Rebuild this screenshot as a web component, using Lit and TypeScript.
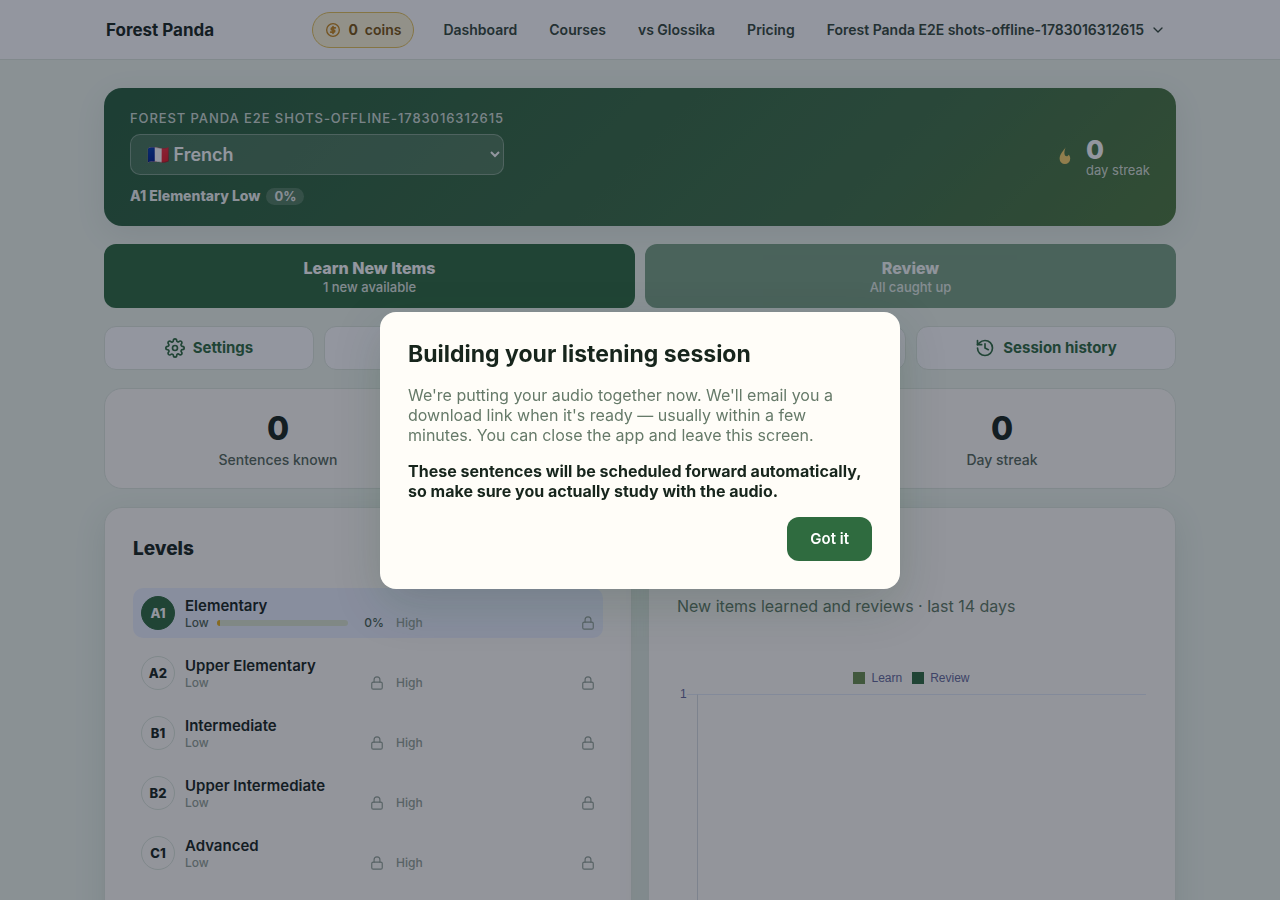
import { LitElement, html, css, svg, nothing } from "lit";
import { customElement, state } from "lit/decorators.js";

const USER = "Forest Panda E2E shots-offline-1783016312615";

const icon = (size: number, body: unknown, stroke = 2) => html`<svg
  width=${size} height=${size} viewBox="0 0 24 24" fill="none" stroke="currentColor"
  stroke-width=${stroke} stroke-linecap="round" stroke-linejoin="round" aria-hidden="true">${body}</svg>`;

const chevron = svg`<path d="m6 9 6 6 6-6"/>`;
const lock = svg`<rect x="3" y="10.500" width="18" height="12" rx="2.500"/><path d="M7 10.500V6.500a5 5 0 0 1 10 0v4"/>`;
const history = svg`<path d="M3 12a9 9 0 1 0 9-9 9.750 9.750 0 0 0-6.740 2.740L3 8"/><path d="M3 3v5h5"/><path d="M12 7v5l4 2"/>`;
const gear = svg`<circle cx="12" cy="12" r="3"/><path d="M19.4 15a1.65 1.65 0 0 0 .33 1.82l.06.06a2 2 0 0 1 0 2.83 2 2 0 0 1-2.83 0l-.06-.06a1.65 1.65 0 0 0-1.82-.33 1.65 1.65 0 0 0-1 1.51V21a2 2 0 0 1-2 2 2 2 0 0 1-2-2v-.09A1.65 1.65 0 0 0 9 19.4a1.65 1.65 0 0 0-1.82.33l-.06.06a2 2 0 0 1-2.83 0 2 2 0 0 1 0-2.83l.06-.06a1.65 1.65 0 0 0 .33-1.82 1.65 1.65 0 0 0-1.51-1H3a2 2 0 0 1-2-2 2 2 0 0 1 2-2h.09A1.65 1.65 0 0 0 4.6 9a1.65 1.65 0 0 0-.33-1.82l-.06-.06a2 2 0 0 1 0-2.83 2 2 0 0 1 2.83 0l.06.06a1.65 1.65 0 0 0 1.82.33H9a1.65 1.65 0 0 0 1-1.51V3a2 2 0 0 1 2-2 2 2 0 0 1 2 2v.09a1.65 1.65 0 0 0 1 1.51 1.65 1.65 0 0 0 1.82-.33l.06-.06a2 2 0 0 1 2.83 0 2 2 0 0 1 0 2.83l-.06.06a1.65 1.65 0 0 0-.33 1.82V9a1.65 1.65 0 0 0 1.51 1H21a2 2 0 0 1 2 2 2 2 0 0 1-2 2h-.09a1.65 1.65 0 0 0-1.51 1z"/>`;
const coin = svg`<circle cx="12" cy="12" r="9.500"/><g stroke-width="2.500"><path d="M15.500 8.800h-4.500a1.600 1.600 0 0 0 0 3.200h2a1.600 1.600 0 0 1 0 3.200h-4.500"/><path d="M12 6.800v10.400"/></g>`;
const headphones = svg`<path d="M3 18v-6a9 9 0 0 1 18 0v6"/><path d="M21 19a2 2 0 0 1-2 2h-1v-6h3zM3 19a2 2 0 0 0 2 2h1v-6H3z"/>`;

interface Level { code: string; name: string; progress?: number; }

const LEVELS: Level[] = [
  { code: "A1", name: "Elementary", progress: 0 },
  { code: "A2", name: "Upper Elementary" },
  { code: "B1", name: "Intermediate" },
  { code: "B2", name: "Upper Intermediate" },
  { code: "C1", name: "Advanced" },
];

@customElement("app-root")
export class AppRoot extends LitElement {
  @state() private dialogOpen = true;

  static styles = css`
    :host {
      display: block;
      height: 100vh;
      overflow: hidden;
      background: #eef6ec;
      color: #17251c;
      font-family: Inter, "Liberation Sans", sans-serif;
      font-size: 16px;
      line-height: 20px;
    }
    *, *::before, *::after { box-sizing: border-box; }
    h1, h2, p, ul { margin: 0; padding: 0; }
    button, select { font: inherit; cursor: pointer; }
    svg { display: block; flex: none; }

    .header { background: #fff; border-bottom: 1px solid #dfe8dd; }
    .bar {
      max-width: 1072px;
      height: 59px;
      margin: 0 auto;
      padding: 0 10px 0 2px;
      display: flex;
      align-items: center;
      justify-content: space-between;
    }
    .brand { color: inherit; font-size: 17px; font-weight: 700; text-decoration: none; }
    .nav { display: flex; align-items: center; gap: 32px; font-size: 14px; font-weight: 600; color: #33473a; }
    .nav a { color: inherit; text-decoration: none; }
    .nav .coins {
      display: flex;
      align-items: center;
      gap: 7px;
      height: 36px;
      padding: 0 12px;
      margin-right: -3px;
      border: 1px solid #e6c35a;
      border-radius: 18px;
      background: #fdf6d8;
      color: #7a5510;
    }
    .coins svg { color: #c8871b; }
    .coins b { font-weight: 700; }
    .account {
      display: flex;
      align-items: center;
      gap: 6px;
      padding: 0;
      border: 0;
      background: none;
      color: inherit;
    }

    .page { max-width: 1120px; margin: 0 auto; padding: 28px 24px; display: flex; flex-direction: column; gap: 18px; }

    .hero {
      display: flex;
      align-items: center;
      justify-content: space-between;
      padding: 20px 26px;
      border-radius: 18px;
      background: linear-gradient(135deg, #285f3c, #3f7046 70%, #4f7a3d);
      box-shadow: 0 8px 32px rgba(15, 23, 42, 0.08);
      color: #fff;
    }
    .hero-main { display: flex; flex-direction: column; }
    .hero-label {
      font-size: 13px;
      font-weight: 500;
      letter-spacing: 0.07em;
      text-transform: uppercase;
      color: rgba(255, 255, 255, 0.8);
    }
    .language {
      height: 41px;
      margin: 6px 0 11px;
      padding: 0 12px;
      border: 1px solid rgba(255, 255, 255, 0.3);
      border-radius: 10px;
      background: rgba(255, 255, 255, 0.14);
      color: #fff;
      font-size: 18px;
      font-weight: 600;
    }
    .language option { color: #17251c; }
    .level-line { display: flex; align-items: center; gap: 6px; font-size: 14px; font-weight: 800; color: rgba(255, 255, 255, 0.95); }
    .pill {
      padding: 0 8px;
      border-radius: 9px;
      background: rgba(255, 255, 255, 0.18);
      font-size: 13px;
      font-weight: 700;
      line-height: 17px;
      color: rgba(255, 255, 255, 0.9);
    }
    .streak { display: flex; align-items: center; gap: 12px; padding-bottom: 2px; }
    .streak svg { color: #fbd36a; }
    .streak-number { font-size: 26px; line-height: 28px; font-weight: 800; }
    .streak-label { font-size: 13px; line-height: 13px; color: rgba(255, 255, 255, 0.8); }

    .actions { display: grid; grid-template-columns: 1fr 1fr; gap: 10px; }
    .action {
      display: flex;
      flex-direction: column;
      align-items: center;
      padding: 14px 16px 12px;
      border: 0;
      border-radius: 12px;
      background: #2f6b3f;
      color: #fff;
      font-size: 16px;
      font-weight: 800;
      line-height: 20px;
    }
    .action small { font-size: 13px; font-weight: 500; line-height: 18px; opacity: 0.85; }
    .action:disabled { opacity: 0.6; cursor: default; }

    .tools { display: flex; gap: 10px; }
    .tool {
      flex: 208 1 0;
      display: flex;
      align-items: center;
      justify-content: center;
      gap: 8px;
      height: 44px;
      padding: 0;
      border: 1px solid #dfe8dd;
      border-radius: 12px;
      background: #fff;
      color: #2f6b3f;
      font-size: 15px;
      font-weight: 700;
    }
    .tool.wide { flex-grow: 580; }
    .tool.medium { flex-grow: 258; }

    .card { border: 1px solid #dfe8dd; border-radius: 18px; background: #fffdf8; }
    .stats { display: grid; grid-template-columns: repeat(3, 1fr); gap: 16px; padding: 20px 0 18px; text-align: center; }
    .stat-value { font-size: 32px; line-height: 40px; font-weight: 800; }
    .stat-label { margin-top: 1px; font-size: 14px; font-weight: 500; color: #56695a; }

    .columns { display: grid; grid-template-columns: 1fr 1fr; gap: 16px; }
    .panel { padding: 28px; box-shadow: 0 8px 32px rgba(23, 60, 35, 0.1); }
    .panel h2 { height: 26px; font-size: 19px; line-height: 26px; font-weight: 800; }
    .levels { list-style: none; margin-top: 26px; display: flex; flex-direction: column; gap: 10px; }
    .level { display: flex; align-items: center; gap: 10px; height: 50px; padding: 0 8px; border-radius: 10px; }
    .level.current { background: #ecf1fe; }
    .badge {
      flex: none;
      width: 34px;
      height: 34px;
      border: 1px solid #dce6da;
      border-radius: 50%;
      font-size: 13px;
      font-weight: 800;
      line-height: 32px;
      text-align: center;
    }
    .current .badge { background: #2f6b3f; border-color: #2f6b3f; color: #fff; }
    .level-body { flex: 1; }
    .level-name { font-size: 15px; line-height: 19px; font-weight: 600; }
    .halves { display: grid; grid-template-columns: 1fr 1fr; gap: 12px; font-size: 12px; line-height: 15px; font-weight: 500; color: #94a296; }
    .half { display: flex; align-items: center; justify-content: space-between; gap: 8px; height: 15px; }
    .half.open { color: #4e6353; }
    .track { flex: 1; height: 6px; border-radius: 3px; background: #dce6d0; overflow: hidden; }
    .fill { min-width: 3px; height: 6px; background: #e8b01c; }
    .percent { width: 28px; text-align: right; }

    .activity-note { margin-top: 34px; color: #5f7a63; }
    .chart { margin-top: 55px; padding-right: 1px; font-family: "Liberation Sans", Arial, sans-serif; font-size: 12px; line-height: 14px; color: #64699a; }
    .legend { display: flex; justify-content: center; gap: 10px; }
    .key { display: flex; align-items: center; gap: 6px; }
    .swatch { width: 12px; height: 12px; background: #6b8f4e; }
    .swatch.review { background: #2f6b3f; }
    .plot { display: grid; grid-template-columns: 10px 10px 1fr; height: 300px; margin-top: 9px; }
    .tick { margin-top: -7px; padding-left: 3px; }
    .tick-mark, .area { border-top: 1px solid #e2eaf6; }
    .area { border-left: 1px solid #d8dce0; }

    .overlay {
      position: fixed;
      inset: 0;
      display: flex;
      align-items: center;
      justify-content: center;
      padding: 20px;
      background: rgba(15, 23, 42, 0.45);
    }
    .dialog {
      width: 100%;
      max-width: 520px;
      padding: 28px;
      border-radius: 16px;
      background: #fffdf8;
      box-shadow: 0 16px 48px rgba(20, 60, 35, 0.18);
      display: flex;
      flex-direction: column;
      gap: 16px;
    }
    .dialog h1 { font-size: 23px; line-height: 29px; font-weight: 700; }
    .dialog p { color: #667a69; }
    .dialog .strong { color: #17251c; font-weight: 700; }
    .confirm {
      align-self: flex-end;
      height: 44px;
      padding: 0 23px;
      border: 0;
      border-radius: 12px;
      background: #2f6b3f;
      color: #fff;
      font-size: 15px;
      font-weight: 600;
    }
  `;

  private renderLevel(level: Level) {
    const current = level.progress !== undefined;
    return html`<li class="level ${current ? "current" : ""}">
      <span class="badge">${level.code}</span>
      <div class="level-body">
        <div class="level-name">${level.name}</div>
        <div class="halves">
          ${current
            ? html`<div class="half open">
                <span>Low</span>
                <div class="track"><div class="fill" style="width:${level.progress}%"></div></div>
                <span class="percent">${level.progress}%</span>
              </div>`
            : html`<div class="half"><span>Low</span>${icon(14, lock)}</div>`}
          <div class="half"><span>High</span>${icon(14, lock)}</div>
        </div>
      </div>
    </li>`;
  }

  render() {
    return html`
      <header class="header">
        <div class="bar">
          <a class="brand" href="#">Forest Panda</a>
          <nav class="nav">
            <a class="coins" href="#">${icon(16, coin)}<b>0</b><span>coins</span></a>
            <a href="#">Dashboard</a>
            <a href="#">Courses</a>
            <a href="#">vs Glossika</a>
            <a href="#">Pricing</a>
            <button class="account">${USER}${icon(16, chevron)}</button>
          </nav>
        </div>
      </header>
      <main class="page">
        <section class="hero">
          <div class="hero-main">
            <label class="hero-label" for="language">${USER}</label>
            <select class="language" id="language"><option>🇫🇷 French</option></select>
            <div class="level-line">A1 Elementary Low <span class="pill">0%</span></div>
          </div>
          <div class="streak">
            <svg width="20" height="20" viewBox="0 0 20 20" fill="currentColor" aria-hidden="true">
              <path d="M11.600 1.300C10 4.200 5.600 8 5.600 12.700a5.300 5.300 0 0 0 10.600 0c0-1.500-.5-2.800-1.500-3.900-.4.900-1.200 1.500-2 1.500-2.300 0-3.200-3.400-1.100-9z"/>
            </svg>
            <div>
              <div class="streak-number">0</div>
              <div class="streak-label">day streak</div>
            </div>
          </div>
        </section>
        <section class="actions">
          <button class="action">Learn New Items<small>1 new available</small></button>
          <button class="action" disabled>Review<small>All caught up</small></button>
        </section>
        <section class="tools">
          <button class="tool">${icon(20, gear)}Settings</button>
          <button class="tool wide" aria-label="Listening session">${icon(20, headphones)}</button>
          <button class="tool medium">${icon(20, history)}Session history</button>
        </section>
        <section class="card stats">
          <div><div class="stat-value">0</div><div class="stat-label">Sentences known</div></div>
          <div></div>
          <div><div class="stat-value">0</div><div class="stat-label">Day streak</div></div>
        </section>
        <div class="columns">
          <section class="card panel">
            <h2>Levels</h2>
            <ul class="levels">${LEVELS.map((l) => this.renderLevel(l))}</ul>
          </section>
          <section class="card panel">
            <h2 aria-label="Activity"></h2>
            <p class="activity-note">New items learned and reviews · last 14 days</p>
            <div class="chart">
              <div class="legend">
                <span class="key"><i class="swatch"></i>Learn</span>
                <span class="key"><i class="swatch review"></i>Review</span>
              </div>
              <div class="plot">
                <span class="tick">1</span>
                <span class="tick-mark"></span>
                <div class="area"></div>
              </div>
            </div>
          </section>
        </div>
      </main>
      ${this.dialogOpen
        ? html`<div class="overlay">
            <div class="dialog" role="dialog" aria-modal="true" aria-labelledby="dialog-title">
              <h1 id="dialog-title">Building your listening session</h1>
              <p>We're putting your audio together now. We'll email you a download link when it's ready — usually within a few minutes. You can close the app and leave this screen.</p>
              <p class="strong">These sentences will be scheduled forward automatically, so make sure you actually study with the audio.</p>
              <button class="confirm" @click=${() => (this.dialogOpen = false)}>Got it</button>
            </div>
          </div>`
        : nothing}
    `;
  }
}
